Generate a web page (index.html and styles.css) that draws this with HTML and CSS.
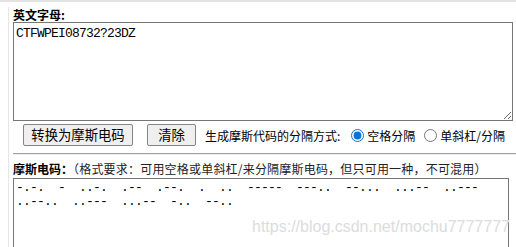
FILE: index.html
```html
<!DOCTYPE html>
<html lang="zh-CN">
<head>
  <meta charset="UTF-8">
  <meta name="viewport" content="width=device-width, initial-scale=1.0">
  <title>摩斯电码转换</title>
  <link rel="stylesheet" href="styles.css">
</head>
<body>
  <div class="topbar"></div>

  <div class="panel">
    <label class="field-label" for="plain">英文字母:</label>
    <textarea id="plain" class="text-box plain-input" spellcheck="false">CTFWPEI08732?23DZ</textarea>

    <div class="actions">
      <button type="button" class="btn btn-convert">转换为摩斯电码</button>
      <button type="button" class="btn btn-clear">清除</button>
      <span class="sep-label">生成摩斯代码的分隔方式:</span>
      <label class="opt"><input type="radio" name="sep" checked>空格分隔</label>
      <label class="opt"><input type="radio" name="sep">单斜杠/分隔</label>
    </div>

    <hr>

    <div class="field-label">摩斯电码：<span class="hint">（格式要求：可用空格或单斜杠/来分隔摩斯电码，但只可用一种，不可混用）</span></div>

    <div class="morse-wrap">
      <textarea class="text-box morse-output" spellcheck="false">-.-.  -  ..-.  .--  .--.  .  ..  -----  ---..  --...  ...--  ..---  ..--..  ..---  ...--  -..  --..</textarea>
      <span class="watermark">https://blog.csdn.net/mochu7777777</span>
    </div>
  </div>
</body>
</html>
```

FILE: styles.css
```css
body {
  margin: 0;
  background-color: white;
  font-family: "Noto Sans CJK SC", "Noto Sans", sans-serif;
  font-size: 12px;
  color: #000;
  overflow: hidden;
}

.topbar {
  height: 2px;
  background-color: #e3e3e3;
}

.panel {
  margin-left: 8px;
  border-left: 1px solid #e6e6e6;
  padding-left: 4px;
}

.field-label {
  display: block;
  font-weight: bold;
  line-height: 15px;
  margin-top: 5px;
}

.hint {
  font-weight: normal;
  color: #222;
  letter-spacing: 0.2px;
}

.text-box {
  display: block;
  box-sizing: border-box;
  margin: 0;
  border: 1px solid #767676;
  padding: 2px;
  font-family: "Liberation Mono", monospace;
  font-size: 13px;
  letter-spacing: -0.8px;
  color: #000;
  outline: none;
}

.plain-input {
  width: 500px;
  height: 99px;
  line-height: 18px;
}

.actions {
  display: flex;
  align-items: center;
  height: 22px;
  margin-top: 3px;
  padding-left: 10px;
  white-space: nowrap;
}

.actions > * {
  flex-shrink: 0;
}

.btn {
  box-sizing: border-box;
  height: 22px;
  padding: 0;
  background-color: #efefef;
  border: 1px solid #858585;
  border-radius: 2px;
  font-family: "Noto Sans CJK SC", sans-serif;
  font-size: 13.33px;
  line-height: 20px;
  color: #000;
  cursor: pointer;
}

.btn:hover {
  background-color: #e5e5e5;
}

.btn-convert {
  width: 110px;
}

.btn-clear {
  width: 49px;
  margin-left: 14px;
}

.sep-label {
  margin-left: 9px;
  margin-right: 11px;
}

.opt {
  display: flex;
  align-items: center;
  margin-right: 9px;
}

.opt input {
  width: 13px;
  height: 13px;
  margin: 0 3px 0 0;
  accent-color: #0a74da;
}

hr {
  margin: 7px 0 0;
  border: none;
  border-top: 1px solid #a0a0a0;
  border-bottom: 1px solid #eeeeee;
}

hr + .field-label {
  margin-top: 6px;
}

.morse-wrap {
  position: relative;
  margin-top: 2px;
}

.morse-output {
  width: 496px;
  height: 100px;
  line-height: 14px;
}

.watermark {
  position: absolute;
  left: 239px;
  top: 40px;
  font-family: "Liberation Sans", Arial, sans-serif;
  font-size: 16px;
  line-height: 18px;
  color: #dcdcdc;
  pointer-events: none;
}
```
